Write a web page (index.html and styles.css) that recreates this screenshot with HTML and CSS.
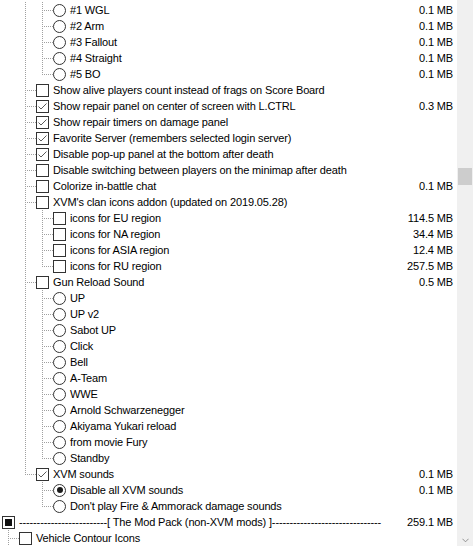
FILE: index.html
```html
<!DOCTYPE html>
<html>
<head>
<meta charset="utf-8">
<link rel="stylesheet" href="styles.css">
</head>
<body>
<div class="frame">
  <div class="tree">
    <div class="row"><span class="g"></span><span class="g v"></span><span class="g t"></span><span class="radio"></span><span class="label">#1 WGL</span><span class="size">0.1 MB</span></div>
    <div class="row"><span class="g"></span><span class="g v"></span><span class="g t"></span><span class="radio"></span><span class="label">#2 Arm</span><span class="size">0.1 MB</span></div>
    <div class="row"><span class="g"></span><span class="g v"></span><span class="g t"></span><span class="radio"></span><span class="label">#3 Fallout</span><span class="size">0.1 MB</span></div>
    <div class="row"><span class="g"></span><span class="g v"></span><span class="g t"></span><span class="radio"></span><span class="label">#4 Straight</span><span class="size">0.1 MB</span></div>
    <div class="row"><span class="g"></span><span class="g v"></span><span class="g l"></span><span class="radio"></span><span class="label">#5 BO</span><span class="size">0.1 MB</span></div>
    <div class="row"><span class="g"></span><span class="g t"></span><span class="box"></span><span class="label">Show alive players count instead of frags on Score Board</span></div>
    <div class="row"><span class="g"></span><span class="g t"></span><span class="box"><svg class="check" viewBox="0 0 11 11"><polyline points="1.5,5.5 4,8 9.5,2.5"/></svg></span><span class="label">Show repair panel on center of screen with L.CTRL</span><span class="size">0.3 MB</span></div>
    <div class="row"><span class="g"></span><span class="g t"></span><span class="box"><svg class="check" viewBox="0 0 11 11"><polyline points="1.5,5.5 4,8 9.5,2.5"/></svg></span><span class="label">Show repair timers on damage panel</span></div>
    <div class="row"><span class="g"></span><span class="g t"></span><span class="box"><svg class="check" viewBox="0 0 11 11"><polyline points="1.5,5.5 4,8 9.5,2.5"/></svg></span><span class="label">Favorite Server (remembers selected login server)</span></div>
    <div class="row"><span class="g"></span><span class="g t"></span><span class="box"><svg class="check" viewBox="0 0 11 11"><polyline points="1.5,5.5 4,8 9.5,2.5"/></svg></span><span class="label">Disable pop-up panel at the bottom after death</span></div>
    <div class="row"><span class="g"></span><span class="g t"></span><span class="box"></span><span class="label">Disable switching between players on the minimap after death</span></div>
    <div class="row"><span class="g"></span><span class="g t"></span><span class="box"></span><span class="label">Colorize in-battle chat</span><span class="size">0.1 MB</span></div>
    <div class="row"><span class="g"></span><span class="g t"></span><span class="box"></span><span class="label">XVM's clan icons addon (updated on 2019.05.28)</span></div>
    <div class="row"><span class="g"></span><span class="g v"></span><span class="g t"></span><span class="box"></span><span class="label">icons for EU region</span><span class="size">114.5 MB</span></div>
    <div class="row"><span class="g"></span><span class="g v"></span><span class="g t"></span><span class="box"></span><span class="label">icons for NA region</span><span class="size">34.4 MB</span></div>
    <div class="row"><span class="g"></span><span class="g v"></span><span class="g t"></span><span class="box"></span><span class="label">icons for ASIA region</span><span class="size">12.4 MB</span></div>
    <div class="row"><span class="g"></span><span class="g v"></span><span class="g l"></span><span class="box"></span><span class="label">icons for RU region</span><span class="size">257.5 MB</span></div>
    <div class="row"><span class="g"></span><span class="g t"></span><span class="box"></span><span class="label">Gun Reload Sound</span><span class="size">0.5 MB</span></div>
    <div class="row"><span class="g"></span><span class="g v"></span><span class="g t"></span><span class="radio"></span><span class="label">UP</span></div>
    <div class="row"><span class="g"></span><span class="g v"></span><span class="g t"></span><span class="radio"></span><span class="label">UP v2</span></div>
    <div class="row"><span class="g"></span><span class="g v"></span><span class="g t"></span><span class="radio"></span><span class="label">Sabot UP</span></div>
    <div class="row"><span class="g"></span><span class="g v"></span><span class="g t"></span><span class="radio"></span><span class="label">Click</span></div>
    <div class="row"><span class="g"></span><span class="g v"></span><span class="g t"></span><span class="radio"></span><span class="label">Bell</span></div>
    <div class="row"><span class="g"></span><span class="g v"></span><span class="g t"></span><span class="radio"></span><span class="label">A-Team</span></div>
    <div class="row"><span class="g"></span><span class="g v"></span><span class="g t"></span><span class="radio"></span><span class="label">WWE</span></div>
    <div class="row"><span class="g"></span><span class="g v"></span><span class="g t"></span><span class="radio"></span><span class="label">Arnold Schwarzenegger</span></div>
    <div class="row"><span class="g"></span><span class="g v"></span><span class="g t"></span><span class="radio"></span><span class="label">Akiyama Yukari reload</span></div>
    <div class="row"><span class="g"></span><span class="g v"></span><span class="g t"></span><span class="radio"></span><span class="label">from movie Fury</span></div>
    <div class="row"><span class="g"></span><span class="g v"></span><span class="g l"></span><span class="radio"></span><span class="label">Standby</span></div>
    <div class="row"><span class="g"></span><span class="g l"></span><span class="box"><svg class="check" viewBox="0 0 11 11"><polyline points="1.5,5.5 4,8 9.5,2.5"/></svg></span><span class="label">XVM sounds</span><span class="size">0.1 MB</span></div>
    <div class="row"><span class="g"></span><span class="g"></span><span class="g t"></span><span class="radio on"></span><span class="label">Disable all XVM sounds</span><span class="size">0.1 MB</span></div>
    <div class="row"><span class="g"></span><span class="g"></span><span class="g l"></span><span class="radio"></span><span class="label">Don't play Fire &amp; Ammorack damage sounds</span></div>
    <div class="row"><span class="box mixed"></span><span class="label">-------------------------[ The Mod Pack (non-XVM mods) ]-------------------------------</span><span class="size">259.1 MB</span></div>
    <div class="row"><span class="g t"></span><span class="box"></span><span class="label">Vehicle Contour Icons</span></div>
  </div>
  <div class="scrollbar">
    <div class="thumb"></div>
    <svg class="arrow" viewBox="0 0 8 5"><polyline points="0.5,0.5 4,4 7.5,0.5"/></svg>
  </div>
</div>
</body>
</html>
```
FILE: styles.css
```css
html, body {
  margin: 0;
  padding: 0;
  background: #fff;
}
body {
  width: 473px;
  height: 546px;
  overflow: hidden;
  font-family: "Liberation Sans", Arial, sans-serif;
  font-size: 11px;
  letter-spacing: -0.14px;
  color: #000;
}
.frame {
  display: flex;
  width: 473px;
  height: 546px;
}
.tree {
  flex: 1;
  padding-top: 2px;
  overflow: hidden;
}
.row {
  display: flex;
  align-items: center;
  height: 16px;
  line-height: 16px;
  padding-right: 4px;
  white-space: nowrap;
}
.g {
  position: relative;
  flex: 0 0 17px;
  height: 16px;
}
.g.v::before,
.g.t::before,
.g.l::before {
  content: "";
  position: absolute;
  left: 8px;
  top: 0;
  width: 1px;
  height: 16px;
  background-image: repeating-linear-gradient(to bottom, #a0a0a0 0 1px, transparent 1px 2px);
}
.g.l::before {
  height: 9px;
}
.g.t::after,
.g.l::after {
  content: "";
  position: absolute;
  left: 9px;
  top: 8px;
  width: 10px;
  height: 1px;
  background-image: repeating-linear-gradient(to right, transparent 0 1px, #a0a0a0 1px 2px);
}
.box,
.radio {
  flex: 0 0 auto;
  box-sizing: border-box;
  width: 13px;
  height: 13px;
  margin-left: 2px;
  border: 1px solid #333;
  background: #fff;
  position: relative;
}
.radio {
  border-radius: 50%;
}
.radio.on::after {
  content: "";
  position: absolute;
  left: 2.5px;
  top: 2.5px;
  width: 6px;
  height: 6px;
  border-radius: 50%;
  background: #1a1a1a;
}
.box.mixed::after {
  content: "";
  position: absolute;
  left: 2px;
  top: 2px;
  width: 7px;
  height: 7px;
  background: #111;
}
.check {
  position: absolute;
  left: 0;
  top: 0;
  width: 11px;
  height: 11px;
  fill: none;
  stroke: #5a5a5a;
  stroke-width: 1;
}
.label {
  margin-left: 4px;
}
.size {
  margin-left: auto;
}
.scrollbar {
  flex: 0 0 16px;
  height: 546px;
  background: #f0f0f0;
  display: flex;
  flex-direction: column;
  align-items: center;
}
.thumb {
  margin-top: 168px;
  width: 14px;
  height: 17px;
  background: #cdcdcd;
}
.arrow {
  margin-top: auto;
  margin-bottom: 3px;
  width: 7px;
  height: 5px;
  fill: none;
  stroke: #858585;
  stroke-width: 1;
}
```
